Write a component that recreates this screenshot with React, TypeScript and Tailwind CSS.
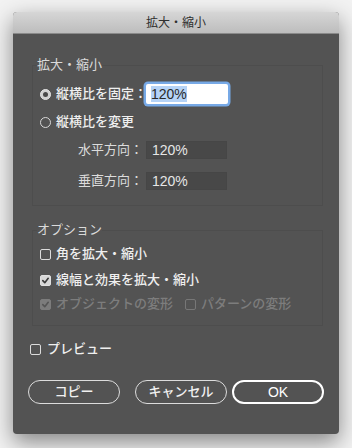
import type { ReactNode } from 'react'

const jp = { fontFamily: '"Liberation Sans", "Noto Sans CJK JP", sans-serif' }

function Radio({ checked }: { checked?: boolean }) {
  return (
    <span
      className={
        checked
          ? 'flex size-[11px] shrink-0 items-center justify-center rounded-full border border-[#e4e4e4] bg-[#d2d2d2]'
          : 'size-[11px] shrink-0 rounded-full border border-[#d8d8d8]'
      }
    >
      {checked && <span className="size-[5px] rounded-full bg-[#4a4a4a]" />}
    </span>
  )
}

function Check({ checked, disabled }: { checked?: boolean; disabled?: boolean }) {
  const box = disabled
    ? checked
      ? 'border-[#7c7c7c] bg-[#7c7c7c]'
      : 'border-[#777]'
    : checked
      ? 'border-[#e0e0e0] bg-[#d8d8d8]'
      : 'border-[#dcdcdc]'
  return (
    <span className={`flex size-[11px] shrink-0 items-center justify-center rounded-[2px] border ${box}`}>
      {checked && (
        <svg viewBox="0 0 10 10" className="size-[9px]">
          <path
            d="M2 5.2 L4.2 7.4 L8 2.6"
            fill="none"
            stroke={disabled ? '#555' : '#3a3a3a'}
            strokeWidth="1.8"
            strokeLinecap="round"
            strokeLinejoin="round"
          />
        </svg>
      )}
    </span>
  )
}

function Group({ label, className, children }: { label: string; className?: string; children: ReactNode }) {
  return (
    <fieldset className={`ml-[19px] w-[291px] border border-[#4d4d4d] pl-[4px] ${className ?? ''}`}>
      <legend className="px-0 text-[13px] leading-[14px] text-[#dadada]">{label}</legend>
      <div className="pl-[3px]">{children}</div>
    </fieldset>
  )
}

function Button({ children, primary }: { children: ReactNode; primary?: boolean }) {
  return (
    <button
      className={
        primary
          ? 'flex h-[24px] w-[92px] items-center justify-center rounded-full border-2 border-white text-[14px] text-white'
          : 'flex h-[24px] w-[92px] items-center justify-center rounded-full border-[1.5px] border-[#dcdcdc] text-[13px] font-medium text-[#f0f0f0]'
      }
    >
      {children}
    </button>
  )
}

export default function App() {
  return (
    <div className="h-[448px] w-[352px] overflow-hidden bg-[#f2f2f2] pt-[12px]" style={jp}>
      <div className="ml-[13px] flex h-[422px] w-[326px] flex-col rounded-[4px] bg-[#535353] shadow-[0_8px_22px_rgba(0,0,0,0.45)]">
        <div className="flex h-[22px] shrink-0 items-center justify-center rounded-t-[4px] border-b border-[#8a8a8a] bg-gradient-to-b from-[#d6d6d6] to-[#bdbdbd] text-[12px] text-[#2e2e2e]">
          拡大・縮小
        </div>

        <Group label="拡大・縮小" className="mt-[24px] pb-[15px]">
          <div className="mt-[12px] flex h-[20px] items-center">
            <div className="flex w-[106px] items-center gap-[5px]">
              <Radio checked />
              <span className="text-[13px] font-medium whitespace-nowrap text-[#efefef]">縦横比を固定：</span>
            </div>
            <div className="flex h-[20px] w-[82px] items-center rounded-[2px] bg-white pl-[5px] ring-[2.5px] ring-[#77a9e6]">
              <span className="bg-[#b5d3f7] text-[14px] leading-[16px] text-[#2a2a2a]">120%</span>
            </div>
          </div>
          <div className="mt-[10px] flex h-[16px] items-center gap-[5px]">
            <Radio />
            <span className="text-[13px] font-medium text-[#efefef]">縦横比を変更</span>
          </div>
          <div className="mt-[11px] flex h-[18px] items-center">
            <span className="w-[103px] text-right text-[13px] text-[#dcdcdc]">水平方向：</span>
            <div className="ml-[3px] flex h-[18px] w-[81px] items-center border border-[#464646] bg-[#484848] pl-[5px] text-[14px] text-[#e6e6e6]">
              120%
            </div>
          </div>
          <div className="mt-[13px] flex h-[18px] items-center">
            <span className="w-[103px] text-right text-[13px] text-[#dcdcdc]">垂直方向：</span>
            <div className="ml-[3px] flex h-[18px] w-[81px] items-center border border-[#464646] bg-[#484848] pl-[5px] text-[14px] text-[#e6e6e6]">
              120%
            </div>
          </div>
        </Group>

        <Group label="オプション" className="mt-[17px] pb-[13px]">
          <div className="mt-[9px] flex h-[16px] items-center gap-[5px]">
            <Check />
            <span className="text-[13px] font-medium text-[#efefef]">角を拡大・縮小</span>
          </div>
          <div className="mt-[10px] flex h-[16px] items-center gap-[5px]">
            <Check checked />
            <span className="text-[13px] font-medium text-[#efefef]">線幅と効果を拡大・縮小</span>
          </div>
          <div className="mt-[8px] flex h-[16px] items-center">
            <div className="flex w-[145px] items-center gap-[5px]">
              <Check checked disabled />
              <span className="text-[13px] font-medium whitespace-nowrap text-[#7d7d7d]">オブジェクトの変形</span>
            </div>
            <div className="flex items-center gap-[5px]">
              <Check disabled />
              <span className="text-[13px] font-medium whitespace-nowrap text-[#7d7d7d]">パターンの変形</span>
            </div>
          </div>
        </Group>

        <div className="mt-[15px] ml-[17px] flex h-[16px] items-center gap-[6px]">
          <Check />
          <span className="text-[13px] font-medium text-[#efefef]">プレビュー</span>
        </div>

        <div className="mt-[23px] ml-[15px] flex items-center">
          <Button>コピー</Button>
          <div className="ml-[15px]">
            <Button>キャンセル</Button>
          </div>
          <div className="ml-[5px]">
            <Button primary>OK</Button>
          </div>
        </div>
      </div>
    </div>
  )
}
